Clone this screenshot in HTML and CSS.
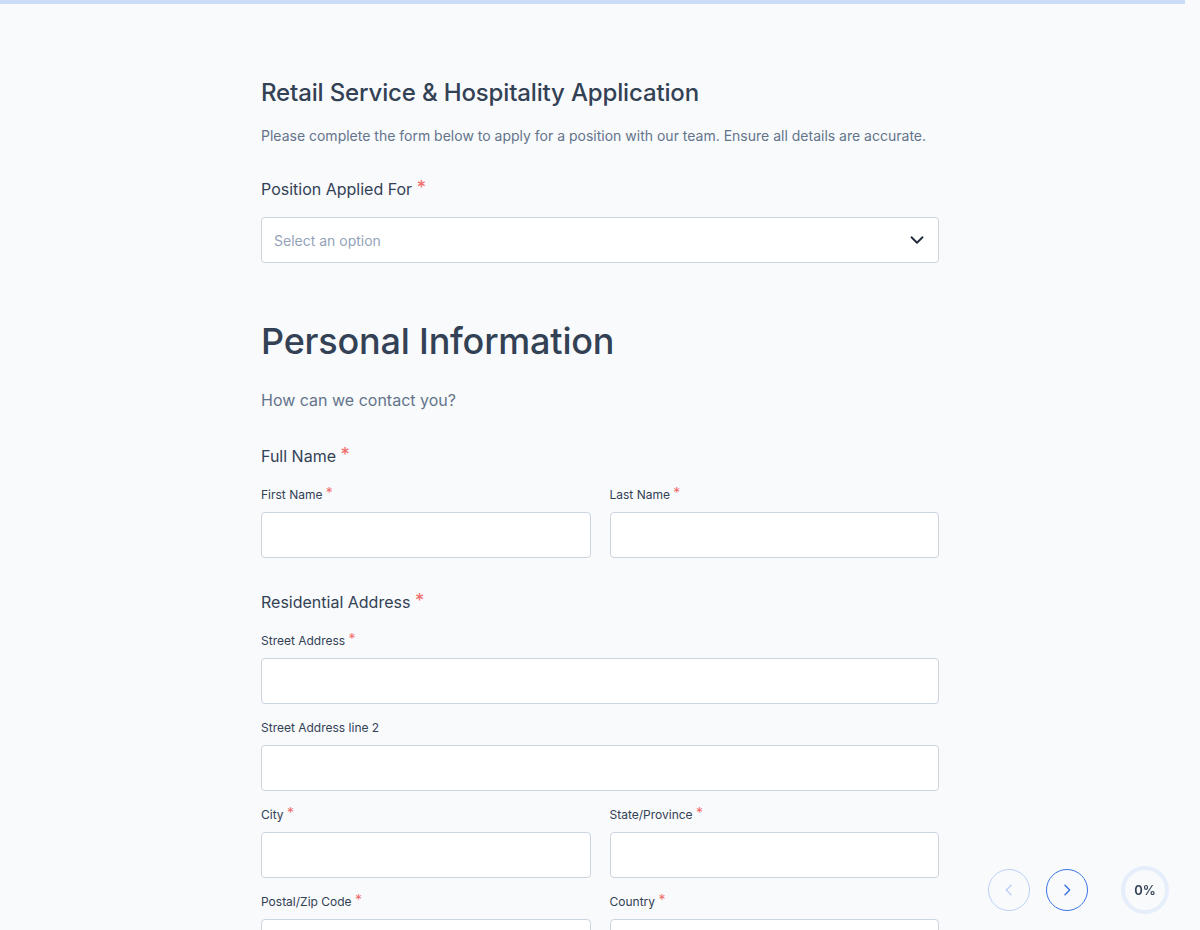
FILE: index.html
```html
<!DOCTYPE html>
<html lang="en">
<head>
    <meta charset="UTF-8">
    <meta name="viewport" content="width=device-width, initial-scale=1.0">
    <title>Retail Service &amp; Hospitality Application</title>
    <link rel="stylesheet" href="styles.css">
</head>
<body>
    <div class="progress-bar"></div>

    <main class="container">
        <h1 class="form-title">Retail Service &amp; Hospitality Application</h1>
        <p class="form-desc">Please complete the form below to apply for a position with our team. Ensure all details are accurate.</p>

        <div class="question">
            <label class="q-label">Position Applied For <span class="req">*</span></label>
            <div class="select">
                <span class="placeholder">Select an option</span>
                <svg width="22" height="22" viewBox="0 0 24 24" fill="none" stroke="#1e293b" stroke-width="2" stroke-linecap="round" stroke-linejoin="round"><path d="M6 9l6 6 6-6"/></svg>
            </div>
        </div>

        <section class="section">
            <h2 class="section-title">Personal Information</h2>
            <p class="section-desc">How can we contact you?</p>

            <div class="question">
                <label class="q-label">Full Name <span class="req">*</span></label>
                <div class="row">
                    <div class="field">
                        <label class="f-label">First Name <span class="req">*</span></label>
                        <input class="input" type="text">
                    </div>
                    <div class="field">
                        <label class="f-label">Last Name <span class="req">*</span></label>
                        <input class="input" type="text">
                    </div>
                </div>
            </div>

            <div class="question">
                <label class="q-label">Residential Address <span class="req">*</span></label>
                <div class="field">
                    <label class="f-label">Street Address <span class="req">*</span></label>
                    <input class="input" type="text">
                </div>
                <div class="field">
                    <label class="f-label">Street Address line 2</label>
                    <input class="input" type="text">
                </div>
                <div class="row">
                    <div class="field">
                        <label class="f-label">City <span class="req">*</span></label>
                        <input class="input" type="text">
                    </div>
                    <div class="field">
                        <label class="f-label">State/Province <span class="req">*</span></label>
                        <input class="input" type="text">
                    </div>
                </div>
                <div class="row">
                    <div class="field">
                        <label class="f-label">Postal/Zip Code <span class="req">*</span></label>
                        <input class="input" type="text">
                    </div>
                    <div class="field">
                        <label class="f-label">Country <span class="req">*</span></label>
                        <input class="input" type="text">
                    </div>
                </div>
            </div>
        </section>
    </main>

    <!-- floating step navigation -->
    <div class="nav">
        <button class="nav-btn disabled" aria-label="Previous">
            <svg width="16" height="16" viewBox="0 0 24 24" fill="none" stroke="currentColor" stroke-width="2.2" stroke-linecap="round" stroke-linejoin="round"><path d="M15 5l-7 7 7 7"/></svg>
        </button>
        <button class="nav-btn" aria-label="Next">
            <svg width="16" height="16" viewBox="0 0 24 24" fill="none" stroke="currentColor" stroke-width="2.2" stroke-linecap="round" stroke-linejoin="round"><path d="M9 5l7 7-7 7"/></svg>
        </button>
        <div class="progress-ring">0%</div>
    </div>
</body>
</html>
```

FILE: styles.css
```css
* {
    margin: 0;
    padding: 0;
    box-sizing: border-box;
}

body {
    font-family: Inter, 'Noto Sans', sans-serif;
    background: #f8fafc;
    color: #334155;
    min-height: 100vh;
    overflow: hidden;
}

.progress-bar {
    height: 4px;
    width: 1185px;
    background: #cbdcf8;
}

.container {
    width: 678px;
    margin: 0 auto;
    padding-top: 73px;
}

.form-title {
    font-size: 24px;
    line-height: 32px;
    font-weight: 500;
    color: #334155;
    letter-spacing: -0.15px;
}

.form-desc {
    margin-top: 17px;
    font-size: 14px;
    line-height: 20px;
    color: #64748b;
}

.question {
    margin-top: 31px;
}

.q-label {
    display: block;
    font-size: 16px;
    line-height: 24px;
    color: #334155;
}

.req {
    color: #f26b6b;
    font-size: 1.15em;
    line-height: 0;
    vertical-align: 1px;
}

.select {
    margin-top: 16px;
    height: 46px;
    background: #fff;
    border: 1px solid #cbd5e1;
    border-radius: 4px;
    display: flex;
    align-items: center;
    justify-content: space-between;
    padding: 0 10px 0 12px;
}

.placeholder {
    font-size: 14px;
    color: #94a3b8;
}

.section {
    margin-top: 54px;
}

.section-title {
    font-size: 36px;
    line-height: 48px;
    font-weight: 500;
    color: #334155;
    letter-spacing: -0.2px;
}

.section-desc {
    margin-top: 23px;
    font-size: 16px;
    line-height: 24px;
    color: #64748b;
}

.section .question {
    margin-top: 32px;
}

.section .question + .question {
    margin-top: 16px;
}

.section .question .q-label {
    margin-bottom: 19px;
}

.row {
    display: grid;
    grid-template-columns: 1fr 1fr;
    gap: 19px;
}

.field {
    margin-bottom: 16px;
}

.f-label {
    display: block;
    font-size: 12px;
    line-height: 16px;
    color: #334155;
    margin-bottom: 9px;
}

.input {
    display: block;
    width: 100%;
    height: 46px;
    background: #fff;
    border: 1px solid #cbd5e1;
    border-radius: 4px;
    font: inherit;
}

.nav {
    position: fixed;
    right: 31px;
    bottom: 16px;
    display: flex;
    align-items: center;
}

.nav-btn {
    width: 42px;
    height: 42px;
    border-radius: 50%;
    border: 1px solid #3b74e8;
    background: transparent;
    color: #3b74e8;
    display: flex;
    align-items: center;
    justify-content: center;
    margin-left: 16px;
}

.nav-btn.disabled {
    border-color: #bcd0f6;
    color: #bcd0f6;
}

.progress-ring {
    margin-left: 33px;
    width: 48px;
    height: 48px;
    border-radius: 50%;
    border: 4px solid #e6edfb;
    display: flex;
    align-items: center;
    justify-content: center;
    font-size: 13px;
    font-weight: 600;
    color: #334155;
}
```
